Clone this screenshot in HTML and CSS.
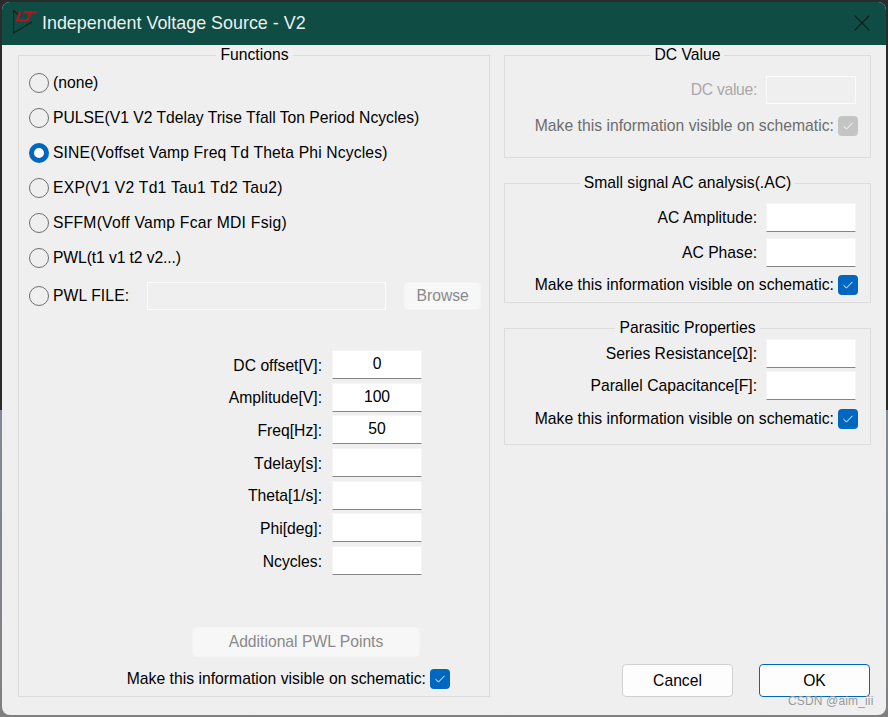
FILE: index.html
```html
<!DOCTYPE html>
<html lang="en">
<head>
<meta charset="utf-8">
<title>Independent Voltage Source - V2</title>
<link rel="stylesheet" href="styles.css">
</head>
<body>
<div class="window">
  <header class="titlebar">
    <svg class="logo" width="24" height="24" viewBox="0 0 24 24" aria-hidden="true">
      <path d="M.5 0V23L19 12" fill="none" stroke="#14201f" stroke-width="1.2"/>
      <path d="M.5 0L7 7" fill="none" stroke="#14201f" stroke-width="1.2"/>
      <path d="M7.2 2L4.2 10.5H14M11 2.2H23.5M17.5 2.2L14.2 11" fill="none" stroke="#b3141c" stroke-width="2.4"/>
    </svg>
    <span class="title">Independent Voltage Source - V2</span>
    <svg class="close" width="16" height="16" viewBox="0 0 16 16" aria-hidden="true">
      <path d="M.7.7L15.3 15.3M15.3.7L.7 15.3" stroke="#0e1a18" stroke-width="1.2" fill="none"/>
    </svg>
  </header>
  <main class="content">
    <fieldset class="group functions">
      <legend>Functions</legend>
      <div class="radios">
        <label class="radio-row"><span class="radio"></span>(none)</label>
        <label class="radio-row"><span class="radio"></span>PULSE(V1 V2 Tdelay Trise Tfall Ton Period Ncycles)</label>
        <label class="radio-row wide-a"><span class="radio on"></span>SINE(Voffset Vamp Freq Td Theta Phi Ncycles)</label>
        <label class="radio-row wide-b"><span class="radio"></span>EXP(V1 V2 Td1 Tau1 Td2 Tau2)</label>
        <label class="radio-row wide-b"><span class="radio"></span>SFFM(Voff Vamp Fcar MDI Fsig)</label>
        <label class="radio-row tight"><span class="radio"></span>PWL(t1 v1 t2 v2...)</label>
        <div class="radio-row file-row">
          <span class="radio"></span><span class="file-label">PWL FILE:</span>
          <span class="disabled-input file-input"></span>
          <span class="btn-disabled browse">Browse</span>
        </div>
      </div>
      <div class="params">
        <span class="plabel">DC offset[V]:</span><span class="input">0</span>
        <span class="plabel">Amplitude[V]:</span><span class="input">100</span>
        <span class="plabel">Freq[Hz]:</span><span class="input">50</span>
        <span class="plabel">Tdelay[s]:</span><span class="input"></span>
        <span class="plabel">Theta[1/s]:</span><span class="input"></span>
        <span class="plabel">Phi[deg]:</span><span class="input"></span>
        <span class="plabel">Ncycles:</span><span class="input"></span>
      </div>
      <div class="fn-bottom">
        <span class="btn-disabled pwl">Additional PWL Points</span>
        <div class="visible-row">
          <span>Make this information visible on schematic:</span>
          <span class="check"><svg width="12" height="10" viewBox="0 0 12 10"><path d="M1.5 5.2L4.5 8L10.5 1.8" fill="none" stroke="#fff" stroke-width="1"/></svg></span>
        </div>
      </div>
    </fieldset>
    <div class="right">
      <fieldset class="group dc">
        <legend>DC Value</legend>
        <div class="row dim"><span>DC value:</span><span class="disabled-input side"></span></div>
        <div class="visible-row dim2">
          <span>Make this information visible on schematic:</span>
          <span class="check off"><svg width="12" height="10" viewBox="0 0 12 10"><path d="M1.5 5.2L4.5 8L10.5 1.8" fill="none" stroke="#fff" stroke-width="1"/></svg></span>
        </div>
      </fieldset>
      <fieldset class="group ac">
        <legend>Small signal AC analysis(.AC)</legend>
        <div class="row"><span>AC Amplitude:</span><span class="input"></span></div>
        <div class="row"><span>AC Phase:</span><span class="input"></span></div>
        <div class="visible-row">
          <span>Make this information visible on schematic:</span>
          <span class="check"><svg width="12" height="10" viewBox="0 0 12 10"><path d="M1.5 5.2L4.5 8L10.5 1.8" fill="none" stroke="#fff" stroke-width="1"/></svg></span>
        </div>
      </fieldset>
      <fieldset class="group para">
        <legend>Parasitic Properties</legend>
        <div class="row"><span>Series Resistance[Ω]:</span><span class="input"></span></div>
        <div class="row"><span>Parallel Capacitance[F]:</span><span class="input"></span></div>
        <div class="visible-row">
          <span>Make this information visible on schematic:</span>
          <span class="check"><svg width="12" height="10" viewBox="0 0 12 10"><path d="M1.5 5.2L4.5 8L10.5 1.8" fill="none" stroke="#fff" stroke-width="1"/></svg></span>
        </div>
      </fieldset>
      <div class="actions">
        <span class="btn">Cancel</span>
        <span class="btn primary">OK</span>
      </div>
    </div>
  </main>
</div>
<span class="watermark">CSDN @aim_iii</span>
</body>
</html>
```
FILE: styles.css
```css
* { box-sizing: border-box; }
html, body { margin: 0; height: 100%; }
body {
  width: 888px;
  height: 717px;
  overflow: hidden;
  position: relative;
  background: linear-gradient(#2b2b2b 0, #2b2b2b 410px, #808a96 410px, #808080 100%);
  padding: 2px 2px;
  font-family: "Liberation Sans", Arial, sans-serif;
  font-size: 15.7px;
  line-height: 18px;
  color: #000;
}
.window {
  width: 884px;
  height: 713px;
  background: #efefef;
  border-radius: 8px;
  overflow: hidden;
  display: flex;
  flex-direction: column;
}
.titlebar {
  height: 43px;
  flex: none;
  background: #0f4c44;
  display: flex;
  align-items: center;
  padding: 0 16px 1px 11px;
}
.logo { flex: none; margin: 0 5px 3px 0; }
.title {
  color: #eaf0ef;
  font-size: 17.9px;
  flex: 1;
}
.content {
  display: flex;
  align-items: stretch;
  gap: 14px;
  padding: 1px 15px 18px 16px;
  flex: 1;
  min-height: 0;
}
.group {
  margin: 0;
  min-width: 0;
  border: 1px solid #dcdcdc;
  padding: 0;
}
.group legend {
  margin: 0 auto;
  padding: 0 4px;
  line-height: 18px;
}
.functions {
  width: 472px;
  flex: none;
  display: flex;
  flex-direction: column;
  padding: 0 9px 0 10px;
}
.radios { display: flex; flex-direction: column; padding-top: 1px; }
.radio-row {
  height: 35px;
  display: flex;
  align-items: center;
  gap: 4px;
}
.wide-a { letter-spacing: 0.14px; }
.wide-b { letter-spacing: 0.24px; }
.tight { letter-spacing: -0.1px; }
.file-row { height: 41px; }
.file-label { white-space: nowrap; letter-spacing: 0.1px; }
.radio {
  width: 20px;
  height: 20px;
  flex: none;
  border-radius: 50%;
  border: 1px solid #6f6f6f;
  background: #efefef;
}
.radio.on {
  border: 5.5px solid #0067c0;
  background: #fff;
}
.disabled-input {
  display: block;
  border: 1px solid #fbfbfb;
  background: #efefef;
  height: 28px;
}
.file-input { width: 239px; margin-left: 14px; flex: none; }
.btn-disabled {
  display: flex;
  align-items: center;
  justify-content: center;
  height: 28px;
  border: 1px solid #f4f4f4;
  background: #f7f7f7;
  border-radius: 4px;
  color: #8a8a8a;
}
.browse { width: 77px; margin-left: 14px; flex: none; }
.params {
  display: grid;
  grid-template-columns: 293px 90px;
  column-gap: 10px;
  row-gap: 3.7px;
  align-items: center;
  justify-items: end;
  margin-top: 34px;
}
.plabel { padding-top: 2px; }
.input {
  display: block;
  width: 90px;
  height: 29px;
  background: #fff;
  border: 1px solid #f5f5f5;
  border-bottom: 1px solid #858585;
  text-align: center;
  line-height: 26px;
}
.fn-bottom {
  margin-top: auto;
  padding-bottom: 7px;
  display: flex;
  flex-direction: column;
  align-items: flex-end;
}
.pwl { width: 228px; height: 30px; margin-right: 60px; margin-bottom: 12px; }
.fn-bottom .visible-row { margin-right: 30px; }
.visible-row {
  display: flex;
  align-items: center;
  justify-content: flex-end;
  gap: 4px;
  height: 20px;
  letter-spacing: 0.025px;
}
.check {
  width: 20px;
  height: 20px;
  flex: none;
  background: #0067c0;
  border-radius: 4px;
  display: flex;
  align-items: center;
  justify-content: center;
}
.check.off { background: #c4c4c4; }
.right {
  width: 367px;
  flex: none;
  display: flex;
  flex-direction: column;
}
.right .visible-row { padding-right: 12px; }
.row {
  display: flex;
  align-items: center;
  justify-content: flex-end;
  gap: 9px;
  height: 29px;
  padding-right: 14px;
}
.row .side { width: 90px; height: 28px; }
.dim { color: #a9a9a9; margin-top: 11px; letter-spacing: -0.3px; }
.dim2 { color: #6d6d6d; margin-top: 12px; }
.dc { height: 112px; }
.ac { height: 129px; margin-top: 16px; }
.ac .row { margin-bottom: 6px; }
.ac .row:first-of-type { margin-top: 11px; }
.ac .visible-row { margin-top: 8px; }
.para { height: 126px; margin-top: 16px; }
.para .row { margin-bottom: 3px; }
.para .row:first-of-type { margin-top: 2px; }
.para .visible-row { margin-top: 9px; }
.actions {
  margin-top: auto;
  display: flex;
  justify-content: flex-end;
  gap: 26px;
  padding-right: 1px;
}
.btn {
  width: 111px;
  height: 33px;
  display: flex;
  align-items: center;
  justify-content: center;
  background: #fdfdfd;
  border: 1px solid #d0d0d0;
  border-radius: 4px;
}
.btn.primary { border: 1.5px solid #0067c0; }
.watermark {
  position: absolute;
  left: 788px;
  top: 694px;
  font-size: 12px;
  line-height: 14px;
  letter-spacing: 0.15px;
  color: #9a9a9a;
}
```
